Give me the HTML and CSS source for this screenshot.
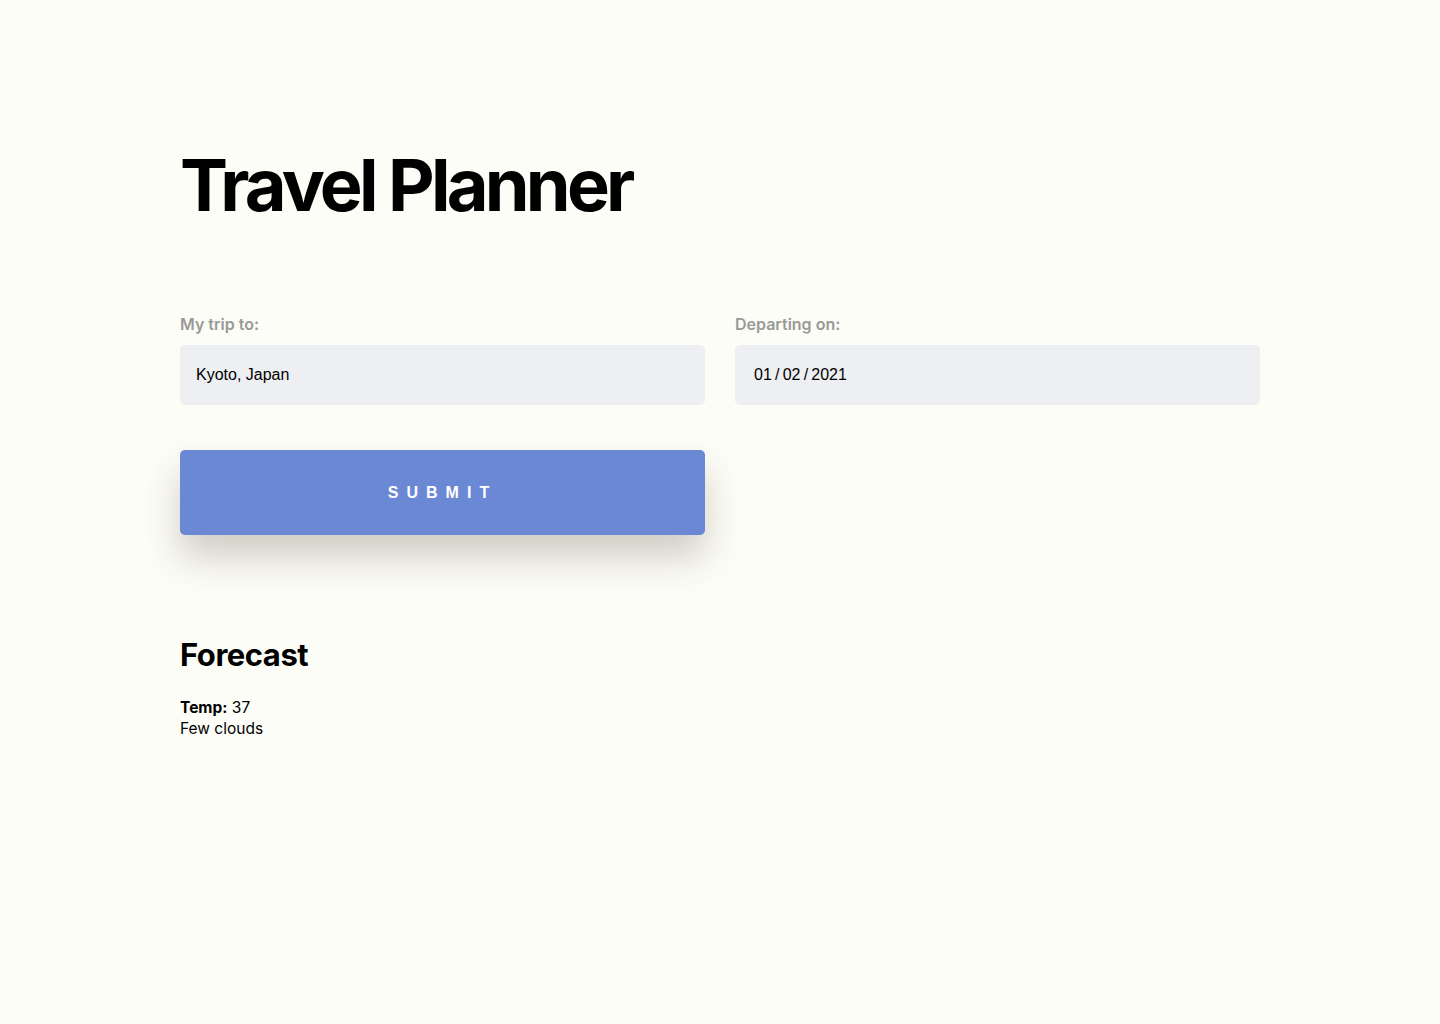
FILE: index.html
```html
<!DOCTYPE html>
<html lang="en">
<head>
<meta charset="utf-8">
<title>Travel Planner</title>
<link rel="stylesheet" href="styles.css">
</head>
<body>
<main class="page">
  <h1 class="title">Travel Planner</h1>
  <form class="trip-form">
    <div class="fields">
      <div class="field">
        <label class="label" for="dest">My trip to:</label>
        <input class="input" id="dest" type="text" value="Kyoto, Japan">
      </div>
      <div class="field">
        <label class="label" for="date">Departing on:</label>
        <div class="input input-date" id="date">01&#8201;/&#8201;02&#8201;/&#8201;2021</div>
      </div>
    </div>
    <div class="actions">
      <button class="submit" type="button">Submit</button>
    </div>
  </form>
  <section class="forecast">
    <h2 class="forecast-title">Forecast</h2>
    <p class="forecast-line"><strong>Temp:</strong> 37</p>
    <p class="forecast-line">Few clouds</p>
  </section>
</main>
</body>
</html>
```
FILE: styles.css
```css
html, body {
  margin: 0;
  padding: 0;
  background: #fdfdf7;
}
body {
  font-family: Inter, "Noto Sans", sans-serif;
  color: #000;
}
.page {
  width: 1080px;
  margin: 0 auto;
  padding-top: 140px;
}
.title {
  margin: 0;
  font-size: 72px;
  line-height: 90px;
  font-weight: 700;
  letter-spacing: -0.052em;
}
.trip-form {
  margin-top: 84px;
}
.fields {
  display: grid;
  grid-template-columns: 1fr 1fr;
  column-gap: 30px;
}
.field {
  display: flex;
  flex-direction: column;
}
.label {
  color: #999a98;
  font-size: 16px;
  font-weight: 600;
  line-height: 20px;
  margin-bottom: 11px;
}
.input {
  box-sizing: border-box;
  height: 60px;
  border: none;
  border-radius: 5px;
  background: #eeeff2;
  padding: 0 16px;
  font-family: "Liberation Sans", Arial, sans-serif;
  font-size: 16px;
  color: #000;
  outline: none;
}
.input-date {
  display: flex;
  align-items: center;
  padding-left: 19px;
}
.actions {
  display: grid;
  grid-template-columns: 1fr 1fr;
  column-gap: 30px;
  margin-top: 45px;
}
.submit {
  height: 85px;
  border: none;
  border-radius: 5px;
  background: #6b88d4;
  color: #fff;
  font-family: "Liberation Sans", Arial, sans-serif;
  font-weight: 700;
  font-size: 16px;
  letter-spacing: 0.5em;
  text-transform: uppercase;
  padding: 0;
  box-shadow: 0 22px 36px rgba(60, 60, 40, 0.24);
  cursor: pointer;
}
.forecast {
  margin-top: 100px;
}
.forecast-title {
  margin: 0 0 22px;
  font-size: 31px;
  line-height: 40px;
  font-weight: 700;
  letter-spacing: -0.015em;
}
.forecast-line {
  margin: 0;
  font-size: 15.5px;
  line-height: 21px;
}
.forecast-line strong {
  font-weight: 700;
}
```
